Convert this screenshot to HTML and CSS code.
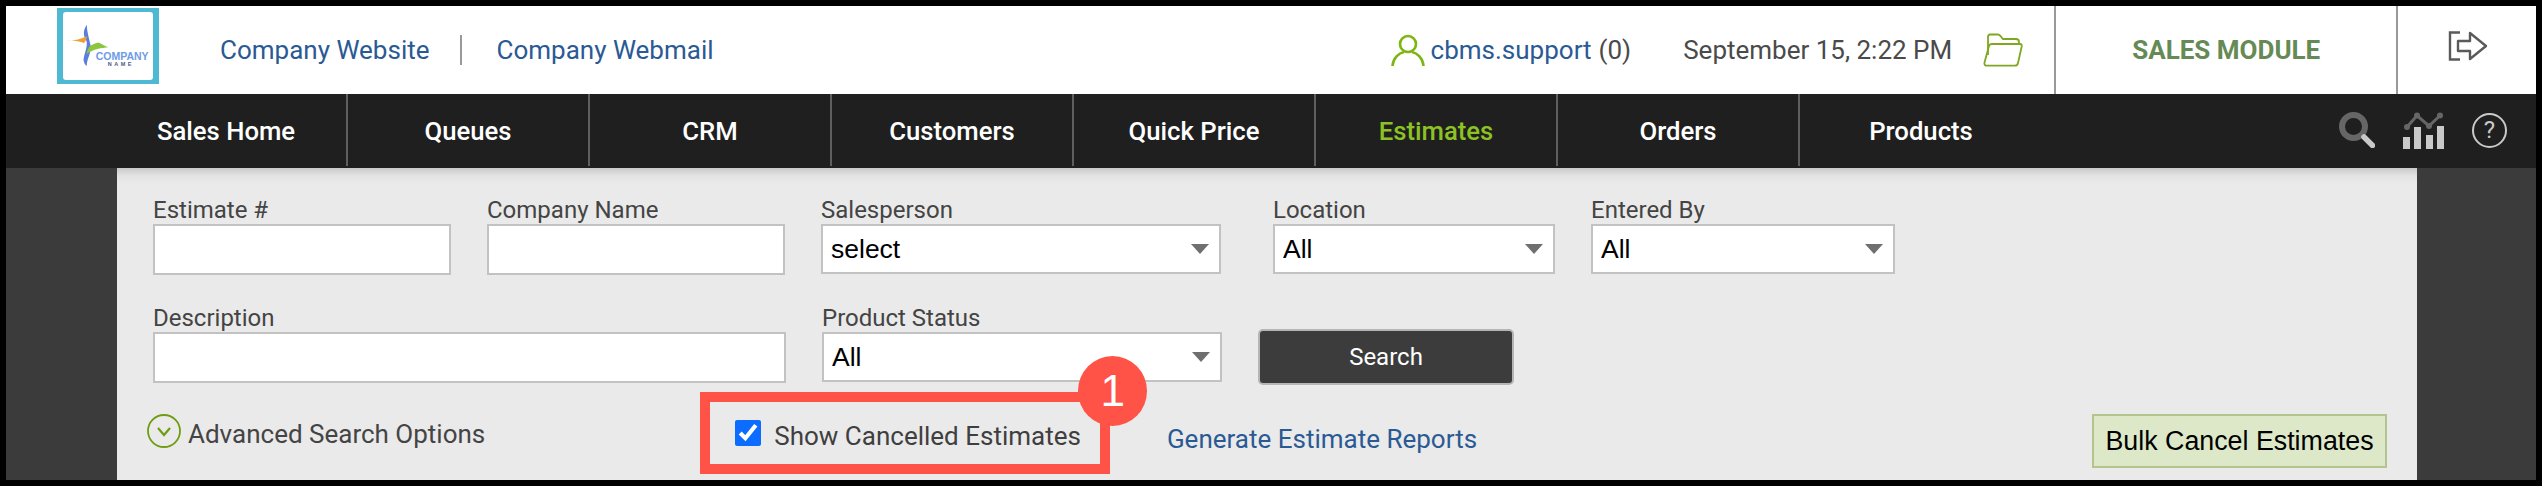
FILE: index.html
```html
<!DOCTYPE html>
<html lang="en">
<head>
<meta charset="utf-8">
<title>Estimates</title>
<link rel="stylesheet" href="styles.css">
</head>
<body>
<div class="frame">
  <header class="topbar">
    <svg class="logo" viewBox="0 0 102 76" width="102" height="76">
      <rect width="102" height="76" fill="#4fb9d3"/>
      <rect x="6" y="4" width="90" height="68" rx="3" fill="#fff"/>
      <path d="M29.7 16.7C25 24 27 29 29.5 33C31 38 27 46 26.5 52C27 55 28 57 29.7 58C30 50 35 44 33.5 37C32 30 30 24 29.7 16.7Z" fill="#5b7fd8"/>
      <path d="M10.3 32.7C17 33 24 31 29.7 28.3C30 30 29 33 27 35C22 33 16 32 10.3 32.7Z" fill="#f0a030"/>
      <path d="M51.3 39.3C45 40 36 41 29.7 46C30 43 31 40 33 38C36 36 39 35 41.5 34.5C45 36 48 38 51.3 39.3Z" fill="#8cc63f"/>
      <text class="logo-name" x="38.7" y="51.7">COMPANY</text>
      <text class="logo-sub" x="50.7" y="58.3">NAME</text>
    </svg>
    <nav class="quick-links">
      <a class="link" href="#">Company Website</a>
      <span class="quick-sep"></span>
      <a class="link" href="#">Company Webmail</a>
    </nav>
    <div class="user">
      <svg class="user-icon" viewBox="0 0 34 32" width="34" height="32">
        <circle cx="17" cy="10" r="8" fill="none" stroke="#7fb512" stroke-width="2.6"/>
        <path d="M1.500 32C2 24 8 19 13 18M32.500 32C32 24 26 19 21 18" fill="none" stroke="#7fb512" stroke-width="2.6"/>
      </svg>
      <a class="link user-name" href="#">cbms.support</a>
      <span class="user-count">(0)</span>
    </div>
    <span class="date">September 15, 2:22 PM</span>
    <svg class="folder" viewBox="0 0 40 34" width="40" height="34">
      <path d="M5 22V4C5 2.500 5.500 1.500 7 1.500H15C16 1.500 16.500 2 17.500 3L20 6H33C35 6 36 7 36 9V11" fill="none" stroke="#7fa822" stroke-width="1.8"/>
      <path d="M9 11H37C38.500 11 39 12 38.700 13.500L35 30C34.600 32 33.500 32.700 32 32.700H4C2 32.700 1 31.500 1.500 29.500L6 13C6.400 11.600 7.500 11 9 11Z" fill="none" stroke="#7fa822" stroke-width="1.8"/>
    </svg>
    <div class="module">SALES MODULE</div>
    <div class="logout">
      <svg viewBox="0 0 40 30" width="40" height="30">
        <path d="M12 1.500H2V28.500H12" fill="none" stroke="#5a5a5a" stroke-width="2.400"/>
        <path d="M10 10H22V2L38 15L22 28V20H10Z" fill="none" stroke="#5a5a5a" stroke-width="2.400" stroke-linejoin="round"/>
      </svg>
    </div>
  </header>

  <nav class="mainnav">
    <a class="nav-item" href="#">Sales Home</a>
    <a class="nav-item" href="#">Queues</a>
    <a class="nav-item" href="#">CRM</a>
    <a class="nav-item" href="#">Customers</a>
    <a class="nav-item" href="#">Quick Price</a>
    <a class="nav-item nav-active" href="#">Estimates</a>
    <a class="nav-item" href="#">Orders</a>
    <a class="nav-item nav-last" href="#">Products</a>
    <div class="tools">
      <svg viewBox="0 0 36 36" width="36" height="36">
        <circle cx="14.500" cy="14.500" r="11.500" fill="none" stroke="#666" stroke-width="6"/>
        <path d="M25 25L33.500 33.500" stroke="#c9c9c9" stroke-width="5.500" stroke-linecap="round"/>
      </svg>
      <svg viewBox="0 0 41 37" width="41" height="37">
        <path d="M4 15L14 3.500L26 14L37 3.500" fill="none" stroke="#666" stroke-width="3"/>
        <g fill="#666"><circle cx="4" cy="15" r="3"/><circle cx="14" cy="3.500" r="3"/><circle cx="26" cy="14" r="3"/><circle cx="37" cy="3.500" r="3"/></g>
        <g fill="#c9c9c9"><rect x="0" y="25" width="7" height="12"/><rect x="11" y="15" width="7" height="22"/><rect x="23" y="23" width="7" height="14"/><rect x="34" y="14" width="7" height="23"/></g>
      </svg>
      <span class="help">?</span>
    </div>
  </nav>

  <main class="workspace">
    <section class="panel">
      <div class="form-row">
        <label class="field w-298"><span class="field-label">Estimate #</span><input class="control" type="text"></label>
        <label class="field w-298"><span class="field-label">Company Name</span><input class="control" type="text"></label>
        <label class="field w-400"><span class="field-label">Salesperson</span><span class="select-wrap"><select class="control select"><option>select</option></select></span></label>
        <label class="field w-282 after-wide"><span class="field-label">Location</span><span class="select-wrap"><select class="control select"><option>All</option></select></span></label>
        <label class="field w-304"><span class="field-label">Entered By</span><span class="select-wrap"><select class="control select"><option>All</option></select></span></label>
      </div>
      <div class="form-row second">
        <label class="field w-633"><span class="field-label">Description</span><input class="control" type="text"></label>
        <label class="field w-400"><span class="field-label">Product Status</span><span class="select-wrap"><select class="control select"><option>All</option></select></span></label>
        <button class="search-btn" type="button">Search</button>
      </div>
      <div class="action-row">
        <a class="advanced" href="#">
          <svg viewBox="0 0 34 34" width="34" height="34">
            <circle cx="17" cy="17" r="16" fill="none" stroke="#6f9c12" stroke-width="1.800"/>
            <path d="M11 14L17 21L23 14" fill="none" stroke="#6f9c12" stroke-width="2.200"/>
          </svg>
          <span class="advanced-text">Advanced Search Options</span>
        </a>
        <label class="show-cancelled">
          <input class="check" type="checkbox" checked>
          <span class="check-text">Show Cancelled Estimates</span>
          <span class="callout"></span>
          <span class="callout-badge">1</span>
        </label>
        <a class="link reports" href="#">Generate Estimate Reports</a>
        <button class="bulk-btn" type="button">Bulk Cancel Estimates</button>
      </div>
    </section>
  </main>
</div>
</body>
</html>
```
FILE: styles.css
```css
* { box-sizing: border-box; }
html, body { margin: 0; padding: 0; background: #000; }
body { font-family: Roboto, "Liberation Sans", sans-serif; }
.frame { width: 2542px; height: 486px; padding: 6px; overflow: hidden; background: #000; }

.topbar { display: flex; align-items: center; height: 88px; background: #fff; padding-left: 51px; }
.logo { display: block; flex: none; margin-top: -8px; }
.logo-name { font-family: "Liberation Sans", sans-serif; font-weight: 700; font-size: 10.500px; fill: #6d9be8; }
.logo-sub { font-family: "Liberation Sans", sans-serif; font-weight: 700; font-size: 5.500px; letter-spacing: 2.500px; fill: #4a5a8a; }
.quick-links { display: flex; align-items: center; margin-left: 61px; }
.link { color: #2a5a94; text-decoration: none; font-size: 26px; }
.quick-sep { width: 2px; height: 30px; background: #999; margin: 0 35px 0 30px; }
.user { display: flex; align-items: center; margin-left: 677px; color: #4a4a4a; font-size: 26px; }
.user-icon { display: block; margin-right: 6px; }
.user-name { margin-right: 7px; }
.date { margin-left: 52px; font-size: 26px; color: #4a4a4a; }
.folder { display: block; margin-left: 31px; }
.module { display: flex; align-items: center; justify-content: center; width: 342px; height: 88px; margin-left: 31px; border-left: 2px solid #999; font-size: 26px; font-weight: 700; color: #658a56; }
.logout { display: flex; align-items: center; justify-content: center; flex: 1; height: 88px; border-left: 2px solid #999; padding-left: 2px; padding-bottom: 8px; }
.logout svg { display: block; }

.mainnav { display: flex; height: 74px; padding: 0 29px 2px 100px; background: #1f1f1f; }
.nav-item { display: flex; align-items: center; justify-content: center; width: 242px; padding-top: 2px; border-right: 2px solid #5f5f5f; color: #fff; font-size: 25.700px; font-weight: 500; text-decoration: none; }
.nav-active { color: #8cc224; }
.nav-last { border-right: 0; }
.tools { display: flex; align-items: center; margin-left: auto; gap: 28px; }
.tools svg { display: block; }
.help { display: flex; align-items: center; justify-content: center; width: 35px; height: 35px; border: 2px solid #c9c9c9; border-radius: 50%; color: #c9c9c9; font-size: 24px; }

.workspace { height: 312px; padding: 0 119px 0 111px; background: #3b3b3b; }
.panel { height: 312px; padding: 30px 30px 0 36px; background: linear-gradient(#c9c9c9 0, #e3e3e3 8px, #eaeaea 16px); }
.form-row { display: flex; gap: 36px; }
.form-row.second { margin-top: 31px; }
.field { display: block; flex: none; }
.field-label { display: block; height: 26px; font-size: 24px; line-height: 24px; color: #444; }
.w-298 { width: 298px; }
.w-400 { width: 400px; }
.w-282 { width: 282px; }
.w-304 { width: 304px; }
.w-633 { width: 633px; }
.after-wide { margin-left: 16px; }
.control { display: block; width: 100%; height: 51px; margin: 0; border: 2px solid #c2c2c2; border-radius: 0; background: #fff; outline: 0; }
.select-wrap { display: block; position: relative; }
.select-wrap::after { content: ""; position: absolute; top: 20px; right: 12px; border-style: solid; border-width: 10px 9px 0; border-color: #6f6f6f transparent transparent; }
.select { height: 50px; padding: 0 0 0 8px; appearance: none; font-family: "Liberation Sans", sans-serif; font-size: 26.500px; color: #000; }
.search-btn { width: 256px; height: 56px; margin: auto 0 -2px 0; border: 2px solid #b5b5b5; border-radius: 5px; background: #3c3c3c; color: #fff; font-family: Roboto, sans-serif; font-size: 24px; }

.action-row { display: flex; height: 54px; margin: 31px 0 0 -6px; }
.advanced { display: flex; align-items: center; height: 34px; color: #444; text-decoration: none; font-size: 26px; }
.advanced svg { display: block; margin-right: 7px; }
.advanced-text { padding-top: 5px; }
.show-cancelled { display: flex; align-items: center; position: relative; height: 26px; margin: 6px 0 0 250px; color: #3f3f3f; font-size: 26px; }
.check { width: 26px; height: 26px; margin: 0 13px 0 0; accent-color: #0b6cff; }
.check-text { padding-top: 5px; }
.callout { position: absolute; left: -35px; top: -28px; width: 410px; height: 82px; border: 10px solid #ff5347; pointer-events: none; }
.callout-badge { position: absolute; left: 343px; top: -64px; display: flex; align-items: center; justify-content: center; width: 69px; height: 70px; border-radius: 50%; background: #ff5347; color: #fff; font-family: "Liberation Sans", sans-serif; font-size: 44px; }
.reports { align-self: flex-start; margin: 10px 0 0 86px; }
.bulk-btn { width: 295px; height: 54px; margin-left: auto; padding: 0; border: 2px solid #b5c48f; border-radius: 0; background: #dde8c8; color: #000; font-family: "Liberation Sans", sans-serif; font-size: 26.800px; }
```
